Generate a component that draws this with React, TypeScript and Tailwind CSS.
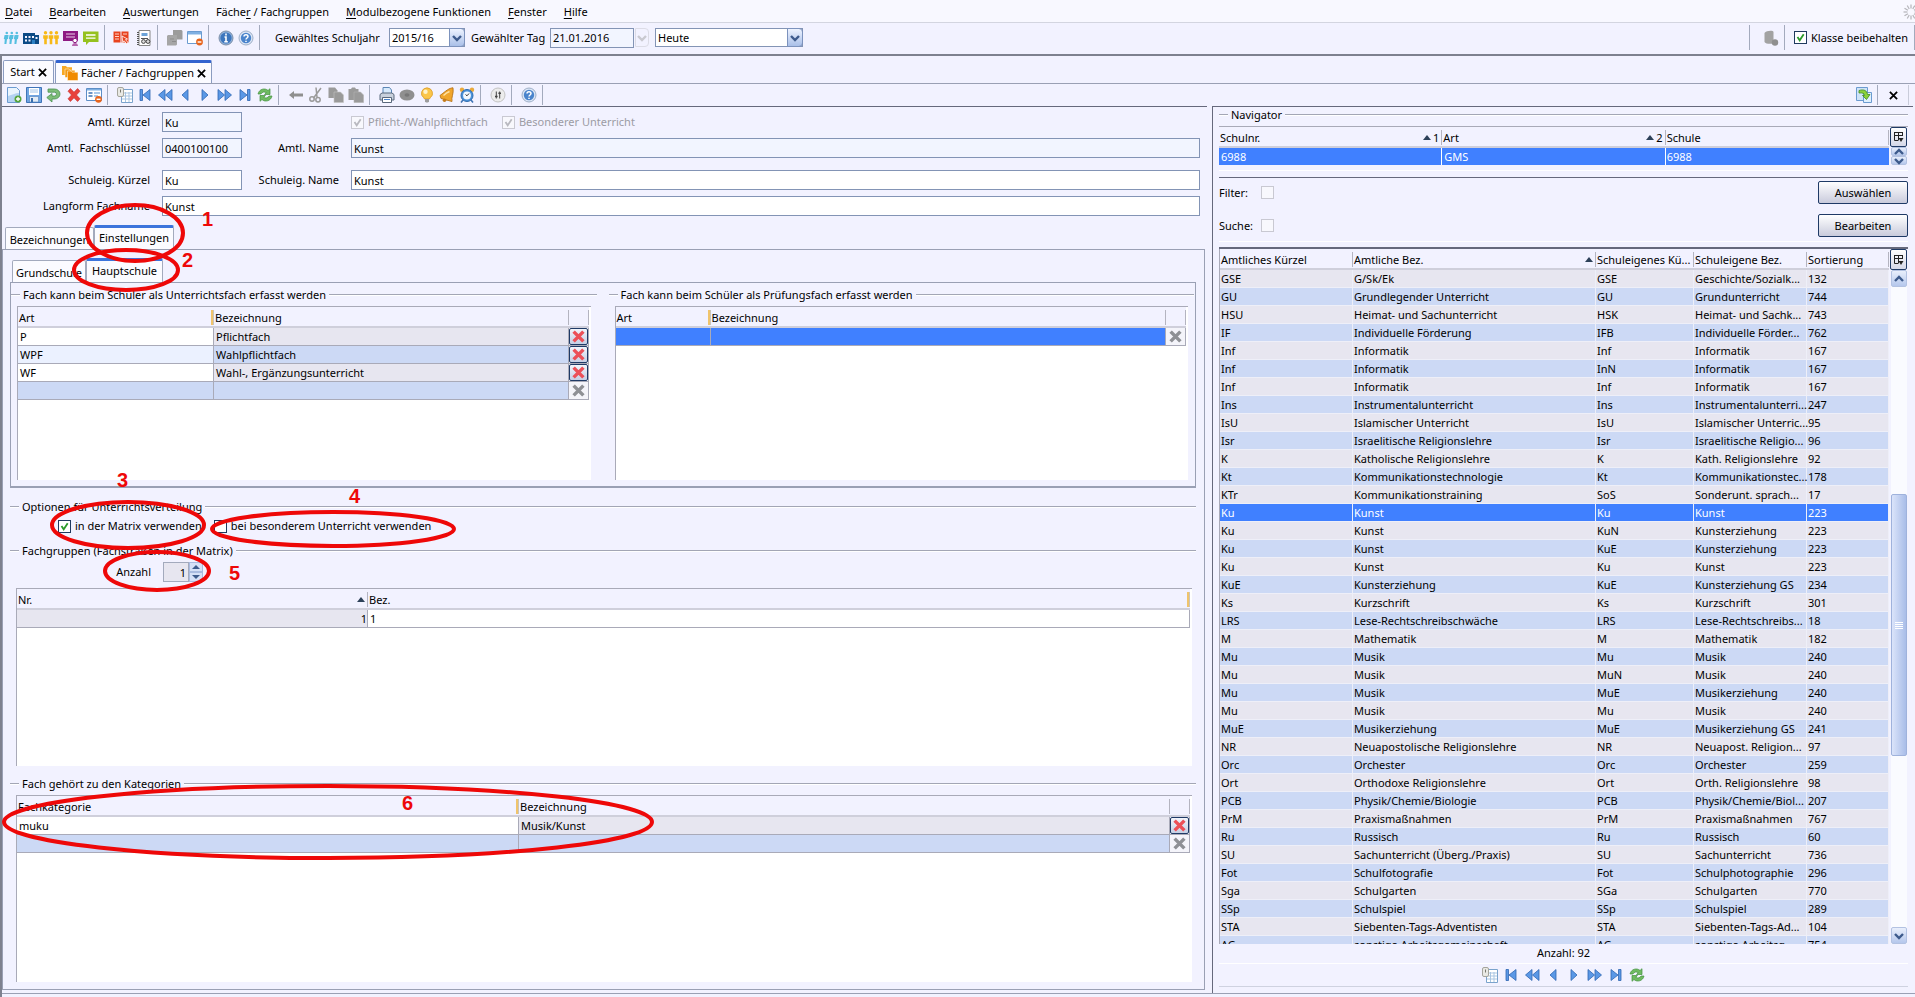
import type { ReactNode } from "react";

type Subject = [string, string, string, string, string];

const MENU: [string, string, string][] = [
  ["", "D", "atei"],
  ["", "B", "earbeiten"],
  ["", "A", "uswertungen"],
  ["Fäche", "r", " / Fachgruppen"],
  ["", "M", "odulbezogene Funktionen"],
  ["", "F", "enster"],
  ["", "H", "ilfe"],
];

const SUBJECTS: Subject[] = [
  ["GSE", "G/Sk/Ek", "GSE", "Geschichte/Sozialk...", "132"],
  ["GU", "Grundlegender Unterricht", "GU", "Grundunterricht", "744"],
  ["HSU", "Heimat- und Sachunterricht", "HSK", "Heimat- und Sachk...", "743"],
  ["IF", "Individuelle Förderung", "IFB", "Individuelle Förder...", "762"],
  ["Inf", "Informatik", "Inf", "Informatik", "167"],
  ["Inf", "Informatik", "InN", "Informatik", "167"],
  ["Inf", "Informatik", "Inf", "Informatik", "167"],
  ["Ins", "Instrumentalunterricht", "Ins", "Instrumentalunterri...", "247"],
  ["IsU", "Islamischer Unterricht", "IsU", "Islamischer Unterric...", "95"],
  ["Isr", "Israelitische Religionslehre", "Isr", "Israelitische Religio...", "96"],
  ["K", "Katholische Religionslehre", "K", "Kath. Religionslehre", "92"],
  ["Kt", "Kommunikationstechnologie", "Kt", "Kommunikationstec...", "178"],
  ["KTr", "Kommunikationstraining", "SoS", "Sonderunt. sprach...", "17"],
  ["Ku", "Kunst", "Ku", "Kunst", "223"],
  ["Ku", "Kunst", "KuN", "Kunsterziehung", "223"],
  ["Ku", "Kunst", "KuE", "Kunsterziehung", "223"],
  ["Ku", "Kunst", "Ku", "Kunst", "223"],
  ["KuE", "Kunsterziehung", "KuE", "Kunsterziehung GS", "234"],
  ["Ks", "Kurzschrift", "Ks", "Kurzschrift", "301"],
  ["LRS", "Lese-Rechtschreibschwäche", "LRS", "Lese-Rechtschreibs...", "18"],
  ["M", "Mathematik", "M", "Mathematik", "182"],
  ["Mu", "Musik", "Mu", "Musik", "240"],
  ["Mu", "Musik", "MuN", "Musik", "240"],
  ["Mu", "Musik", "MuE", "Musikerziehung", "240"],
  ["Mu", "Musik", "Mu", "Musik", "240"],
  ["MuE", "Musikerziehung", "MuE", "Musikerziehung GS", "241"],
  ["NR", "Neuapostolische Religionslehre", "NR", "Neuapost. Religion...", "97"],
  ["Orc", "Orchester", "Orc", "Orchester", "259"],
  ["Ort", "Orthodoxe Religionslehre", "Ort", "Orth. Religionslehre", "98"],
  ["PCB", "Physik/Chemie/Biologie", "PCB", "Physik/Chemie/Biol...", "207"],
  ["PrM", "Praxismaßnahmen", "PrM", "Praxismaßnahmen", "767"],
  ["Ru", "Russisch", "Ru", "Russisch", "60"],
  ["SU", "Sachunterricht (Überg./Praxis)", "SU", "Sachunterricht", "736"],
  ["Fot", "Schulfotografie", "Fot", "Schulphotographie", "296"],
  ["Sga", "Schulgarten", "SGa", "Schulgarten", "770"],
  ["SSp", "Schulspiel", "SSp", "Schulspiel", "289"],
  ["STA", "Siebenten-Tags-Adventisten", "STA", "Siebenten-Tags-Ad...", "104"],
  ["AG", "sonstige Arbeitsgemeinschaft", "AG", "sonstige Arbeitsg...", "754"],
];

const SELECTED_SUBJECT = 13;

const GRAY = "#9a9a9a";

const ICONS: Record<string, ReactNode> = {
  students: (
    <g fill="#55bfe0">
      {[3, 8, 13].map((x) => (
        <g key={x}>
          <circle cx={x + 0.8} cy="3" r="1.3" />
          <path d={`M${x - 1.4} 5h4l-.6 4-1 .2-.6 4.8h-2l.4-4.8-1-.2z`} />
        </g>
      ))}
    </g>
  ),
  teachers: (
    <g fill="#f7b918">
      {[2.5, 8, 13.5].map((x) => (
        <g key={x}>
          <circle cx={x} cy="2.800" r="1.700" />
          <path d={`M${x - 2.3} 5.200h4.600v3.600h-1v5.400h-2.600v-5.400h-1z`} />
        </g>
      ))}
    </g>
  ),
  school: (
    <g>
      <path d="M0 3h12v2h4v9H0z" fill="#0b4a86" />
      <path d="M2 6h2v2H2zM5.500 6h2v2h-2zM9 6h2v2H9zM2 9.500h2v2H2zM5.500 9.500h2v2h-2zM12.500 7h2v2h-2z" fill="#f2f2ff" />
      <path d="M9 10h3v4H9z" fill="#2b7fc4" />
    </g>
  ),
  purple: (
    <g>
      <path d="M0 1h15v10H0z" fill="#8d1a82" />
      <path d="M3 4h9M3 7h9" stroke="#e9cfe8" strokeWidth="1.200" />
      <circle cx="12" cy="10.500" r="2.200" fill="#fff" stroke="#8d1a82" />
      <path d="M9 16c0-4 6-4 6 0z" fill="#b565ad" />
    </g>
  ),
  green: (
    <g>
      <path d="M0 1.500h15.500V12H6l-3 3v-3H0z" fill="#95c11f" />
      <path d="M3 5h9.500M3 8.200h9.500" stroke="#fff" strokeWidth="1.300" />
    </g>
  ),
  redbook: (
    <g>
      <path d="M.5 1.500h7v11h-7zM8.500 1.500h7v11h-7z" fill="#e8431f" />
      <path d="M2 4h4M2 6.500h4M2 9h4M10 4h4" stroke="#ffd3c7" />
      <path d="M9 6l5.500 3-2 .6 2.500 3-1.400 1.200-2.500-3-1.300 1.700z" fill="#e8431f" stroke="#fff" strokeWidth=".8" />
    </g>
  ),
  notebook: (
    <g>
      <path d="M3 .5h11v15H3z" fill="#fff" stroke="#888" />
      <path d="M2 2v13" stroke="#555" strokeWidth="2" strokeDasharray="1 1" />
      <path d="M5.500 3h6v3h-6z" fill="#6ca3d8" />
      <path d="M5 8.500h7" stroke="#555" fill="none" />
      <circle cx="7.500" cy="11.500" r="1.900" fill="#ddd" stroke="#444" />
      <circle cx="12" cy="11.500" r="1.900" fill="#ddd" stroke="#444" />
    </g>
  ),
  grayblocks: (
    <g fill="#9b9b9b">
      <path d="M6 0h8.500l1 1v8.500H6z" />
      <path d="M0 6l1-1h9v9.500l-1 1H0z" fill="#a6a6a6" />
      <path d="M3 9h4M5 11.500h4" stroke="#8d8d8d" />
    </g>
  ),
  windowMinus: (
    <g>
      <path d="M.5 1.500h14v12H.5z" fill="#fff" stroke="#6a9bd0" />
      <path d="M1 2h13v2.500H1z" fill="#7fb0e2" />
      <circle cx="12.500" cy="12" r="3.400" fill="#e8641b" />
      <path d="M10.600 12h3.800" stroke="#fff" strokeWidth="1.400" />
    </g>
  ),
  info: (
    <g>
      <circle cx="8" cy="8" r="7" fill="#8fb2dd" stroke="#7d8fa8" />
      <circle cx="8" cy="8" r="5.600" fill="#3d76bd" />
      <path d="M8 3.600v1.800M6.500 7H8v4.500M6.300 11.700h3.500" stroke="#fff" strokeWidth="1.600" fill="none" />
    </g>
  ),
  help: (
    <g>
      <circle cx="8" cy="8" r="7" fill="#dbe5f5" stroke="#9fb0c8" />
      <circle cx="8" cy="8" r="5.200" fill="#4a84cc" />
      <path d="M6 6.600c0-2.600 4-2.600 4 0 0 1.400-2 1.400-2 3M8 10.700v1.400" stroke="#fff" strokeWidth="1.500" fill="none" />
    </g>
  ),
  newdoc: (
    <g>
      <path d="M1.500.5h9l3 3v12h-12z" fill="#eaf4fd" stroke="#6b9bd0" />
      <path d="M2 9c4-1 7-3 11-3v9H2z" fill="#b5d3f2" />
      <circle cx="12" cy="12" r="3.500" fill="#56a63c" />
      <path d="M12 10v4M10 12h4" stroke="#fff" strokeWidth="1.300" />
    </g>
  ),
  save: (
    <g>
      <path d="M.5.5h15v15H.5z" fill="#6fa5e2" stroke="#3f74b8" />
      <path d="M3 1h10v7H3z" fill="#fff" />
      <path d="M4 3h8M4 5h8" stroke="#9fc2e6" />
      <path d="M3.500 9.500h9V15h-9z" fill="#e2ebf5" stroke="#4f82bd" strokeWidth=".6" />
      <path d="M5 11h2v4H5z" fill="#3a6fae" />
    </g>
  ),
  undo: (
    <path d="M2 2h6.500a5.500 5 0 010 10H6v3L.8 10.500 6 6.500v2.500h2.500a2 1.900 0 000-3.800H2z" fill="#7dbd78" stroke="#4a9150" strokeWidth=".8" />
  ),
  cross: (
    <path d="M2 4.200L4.400 1.500 8 5.200l3.600-3.700L14 4.200 10.500 8l3.500 3.800-2.400 2.700L8 10.800l-3.600 3.700L2 11.800 5.500 8z" fill="#e8413c" stroke="#c22f2c" strokeWidth=".6" />
  ),
  formMinus: (
    <g>
      <path d="M.5 1.500h15v12H.5z" fill="#fff" stroke="#5d8ec6" />
      <path d="M1 2h14v1.500H1z" fill="#7fb0e2" />
      <path d="M2.500 6h4M2.500 9h4" stroke="#3f74b5" strokeWidth="1.400" />
      <path d="M8 5h6v2H8zM8 8h4v2H8z" fill="#a9c9ea" />
      <circle cx="12.500" cy="12.300" r="3.400" fill="#e8641b" />
      <path d="M10.600 12.300h3.800" stroke="#fff" strokeWidth="1.400" />
    </g>
  ),
  list: (
    <g>
      <path d="M4.500 2.500h11v13h-11z" fill="#fff" stroke="#7aa3cc" />
      <path d="M5 6h10M5 9h10M5 12h10M8.500 5v10M12 5v10" stroke="#a9c5e2" />
      <rect x=".5" y=".5" width="6" height="9" rx="1.500" fill="#e9e9e4" stroke="#a5a59c" />
      <path d="M3.500 2.500v3" stroke="#77776e" />
    </g>
  ),
  first: (
    <g fill="#5a98e6" stroke="#2f66b0" strokeWidth=".8">
      <path d="M3 2.500h2.500v11H3z" />
      <path d="M13 2.500v11L6 8z" />
    </g>
  ),
  rewind: (
    <path d="M8 2.500v11L1.500 8zM15 2.500v11L8.500 8z" fill="#5a98e6" stroke="#2f66b0" strokeWidth=".8" />
  ),
  prev: <path d="M11 2.500v11L5 8z" fill="#5a98e6" stroke="#2f66b0" strokeWidth=".8" />,
  next: <path d="M5 2.500v11L11 8z" fill="#5a98e6" stroke="#2f66b0" strokeWidth=".8" />,
  forward: (
    <path d="M1 2.500v11L7.500 8zM8 2.500v11L14.500 8z" fill="#5a98e6" stroke="#2f66b0" strokeWidth=".8" />
  ),
  last: (
    <g fill="#5a98e6" stroke="#2f66b0" strokeWidth=".8">
      <path d="M3 2.500v11L10 8z" />
      <path d="M10.500 2.500H13v11h-2.500z" />
    </g>
  ),
  refresh: (
    <g fill="#6fbb62" stroke="#44903f" strokeWidth=".7">
      <path d="M1 7c1-5 7-6.500 10-3.500l2-1.800V7.500H7.500l1.800-1.800C7.500 4.500 5 5 4 7z" />
      <path d="M15 9c-1 5-7 6.500-10 3.500l-2 1.800V8.500h5.500l-1.800 1.800c1.800 1.200 4.300.7 5.300-1.300z" />
    </g>
  ),
  back: <path d="M1 8l5-4v2.500h9v3H6V12z" fill="#8f8f8f" />,
  cut: (
    <g stroke={GRAY} fill="none" strokeWidth="1.500">
      <path d="M13 1L5.500 11M8 .5l1 9.500" />
      <circle cx="4" cy="12" r="2.200" />
      <circle cx="10" cy="12.800" r="2.200" />
    </g>
  ),
  copy: (
    <g fill={GRAY}>
      <path d="M.5.500h6.500l2.500 3V11h-9z" />
      <path d="M6 5h6.500L15.500 8v7.500H6z" stroke="#c4c4c4" strokeWidth=".6" />
    </g>
  ),
  paste: (
    <g fill={GRAY}>
      <path d="M.5 2H3l1-1.500h3L8 2h2.500v11H.5z" />
      <path d="M6 5h6.500L15.500 8v7.500H6z" stroke="#b4b4b4" strokeWidth=".6" />
    </g>
  ),
  print: (
    <g>
      <path d="M4 .5h6.500l2 2.500v4H4z" fill="#d8eafc" stroke="#5b86b5" />
      <path d="M1 7.500l2-1.500h10l2 1.500V13H1z" fill="#c9d1dc" stroke="#59687c" />
      <path d="M3.500 10.500h9v5h-9z" fill="#fff" stroke="#59687c" />
      <path d="M5 12.500h6" stroke="#4a84cc" />
    </g>
  ),
  disc: (
    <g>
      <ellipse cx="8" cy="8" rx="7.500" ry="5.500" fill="#8f8f8f" />
      <ellipse cx="8" cy="8" rx="2.500" ry="1.800" fill="#777" />
    </g>
  ),
  bulb: (
    <g>
      <path d="M8 .8a6 5.600 0 00-3.200 10L5.500 12h5l.7-1.200A6 5.600 0 008 .8z" fill="#fbc64a" stroke="#d99a25" strokeWidth=".8" />
      <circle cx="6.500" cy="4.800" r="2.200" fill="#fff3cb" />
      <path d="M6 12h4v2.500l-1 1H7l-1-1z" fill="#9d9d9d" />
    </g>
  ),
  horn: (
    <g>
      <path d="M14 .8C10 1 7 4 1 8.500l1 3 11 3c-1-4 2-8 1-13.700z" fill="#f0a52a" stroke="#b8741a" strokeWidth=".9" />
      <path d="M10.500 4.500C8 5.500 6 7 4.500 8.500" stroke="#ffe1a0" strokeWidth="1.400" fill="none" />
      <circle cx="5.500" cy="13.200" r="1.800" fill="#c47c1c" />
    </g>
  ),
  clock: (
    <g>
      <circle cx="3" cy="2.800" r="2.200" fill="#e9a93b" />
      <circle cx="13" cy="2.800" r="2.200" fill="#e9a93b" />
      <path d="M4 13l-2 2.500M12 13l2 2.500" stroke="#3f74b5" strokeWidth="1.600" />
      <circle cx="8" cy="8.500" r="6" fill="#4b93da" stroke="#2f6cae" />
      <circle cx="8" cy="8.500" r="3.900" fill="#f3f9ff" />
      <path d="M8 8.800l2-2.300M8 8.800L6.500 7.500" stroke="#333" />
    </g>
  ),
  sliders: (
    <g>
      <circle cx="8" cy="8" r="7" fill="#ececec" stroke="#c3c3c3" />
      <path d="M6.300 4.500v7M9.700 4.500v7" stroke="#444" />
      <path d="M5 9.500h2.600M8.400 6.300H11" stroke="#444" strokeWidth="1.600" />
    </g>
  ),
  folders: (
    <g>
      <path d="M0 1h4l1 1.200h5V10H0z" fill="#f7a823" />
      <path d="M3 4h4l1 1.200h5V12.500H3z" fill="#f39a10" stroke="#fff" strokeWidth=".5" />
      <path d="M5.500 6h3.500l1 1.200h6V15.500H5.500z" fill="#f08a00" stroke="#fff" strokeWidth=".5" />
    </g>
  ),
  export: (
    <g>
      <path d="M.5.500h11v13H.5z" fill="#cfe3f8" stroke="#6b9bd0" />
      <path d="M7.500 5.500h8v10h-8z" fill="#dff0fd" stroke="#6b9bd0" />
      <path d="M3 3.500c5-1.500 8 0 8.500 4H14l-3.500 5L6.500 8.500h2c0-2-2-3-5.500-2.500z" fill="#8bd23a" stroke="#3f8a1e" strokeWidth=".8" />
    </g>
  ),
  db: (
    <g fill="#a2a2a2">
      <path d="M1.500 3C3 .5 10.500 0 10.500 2v11c-2 1.500-8 1-9-1z" />
      <circle cx="12" cy="12.500" r="3.200" fill="#8f8f8f" />
    </g>
  ),
};

function Icon({ name }: { name: string }) {
  return (
    <svg viewBox="0 0 16 16" className="size-4 shrink-0" aria-hidden="true">
      {ICONS[name]}
    </svg>
  );
}

function CloseGlyph() {
  return (
    <svg viewBox="0 0 8 8" className="size-[9px]" aria-hidden="true">
      <path d="M.8.8l6.400 6.400M7.200.8L.8 7.200" stroke="#000" strokeWidth="1.600" />
    </svg>
  );
}

function ToolGroup({ icons, className = "pl-[9px] gap-1" }: { icons: string[]; className?: string }) {
  return (
    <div className={`flex items-center self-stretch border-r border-[#a3aabd] pr-[5px] ${className}`}>
      {icons.map((name) => (
        <button key={name} type="button" aria-label={name}>
          <Icon name={name} />
        </button>
      ))}
    </div>
  );
}

function Chevron({ up, color = "#3d5a8c" }: { up?: boolean; color?: string }) {
  return (
    <svg viewBox="0 0 10 8" className="h-2 w-2.5" aria-hidden="true">
      <path d={up ? "M1 6l4-4 4 4" : "M1 2l4 4 4-4"} fill="none" stroke={color} strokeWidth="2.400" />
    </svg>
  );
}

function Combo({ label, value, width }: { label: string; value: string; width: string }) {
  return (
    <div className={`relative h-[19px] ${width}`}>
      <select
        aria-label={label}
        defaultValue={value}
        className="h-full w-full appearance-none border border-[#8394b5] bg-white pl-0.5 pr-4 leading-4"
      >
        <option>{value}</option>
      </select>
      <span className="pointer-events-none absolute right-0 top-0 flex h-full w-4 items-center justify-center rounded-r-sm border border-[#7c92bd] bg-linear-to-b from-[#eef3ff] to-[#a9bfe8]">
        <Chevron />
      </span>
    </div>
  );
}

function Box({ id, checked, disabled }: { id: string; checked?: boolean; disabled?: boolean }) {
  return (
    <span className="relative flex size-[13px] shrink-0">
      <input
        id={id}
        type="checkbox"
        defaultChecked={checked}
        disabled={disabled}
        className={`size-[13px] appearance-none border ${
          disabled ? "border-[#c9c9d2] bg-[#f8f8fd]" : "border-[#1f3a5f] bg-white"
        }`}
      />
      {checked && (
        <svg viewBox="0 0 13 13" className="pointer-events-none absolute inset-0">
          <path d="M3.500 6l2.200 3.300 4-6" fill="none" stroke={disabled ? "#b9b9c0" : "#2b9a2b"} strokeWidth="1.800" />
        </svg>
      )}
    </span>
  );
}

function Check({ id, label, checked, disabled }: { id: string; label: string; checked?: boolean; disabled?: boolean }) {
  return (
    <div className={`flex items-center gap-1 whitespace-nowrap ${disabled ? "text-[#9c9ca4]" : ""}`}>
      <Box id={id} checked={checked} disabled={disabled} />
      <label htmlFor={id}>{label}</label>
    </div>
  );
}

function Field({
  id,
  label,
  value,
  labelWidth,
  width,
  readOnly,
}: {
  id: string;
  label: string;
  value: string;
  labelWidth: string;
  width: string;
  readOnly?: boolean;
}) {
  return (
    <>
      <label htmlFor={id} className={`whitespace-pre text-right ${labelWidth}`}>
        {label}
      </label>
      <input
        id={id}
        defaultValue={value}
        readOnly={readOnly}
        className={`ml-3 h-5 border border-[#8394b5] px-0.5 ${width} ${readOnly ? "bg-[#f2f5ff]" : "bg-white"}`}
      />
    </>
  );
}

function Title({ children }: { children: ReactNode }) {
  return (
    <div className="flex h-4 items-center gap-[3px]">
      <span className="h-0.5 w-[9px] border-b border-t border-b-white border-t-[#a3a6b5]" />
      <h2 className="whitespace-nowrap">{children}</h2>
      <span className="h-0.5 flex-1 border-b border-t border-b-white border-t-[#a3a6b5]" />
    </div>
  );
}

type Mark = "orange" | "gray" | "none";

function Th({ children, mark = "gray", sort }: { children?: ReactNode; mark?: Mark; sort?: string }) {
  return (
    <th className="border-b-2 border-[#cfcfdb] bg-[#f2f2ff] p-0 text-left font-normal">
      <div className="flex h-[19px] items-center pl-px pt-0.5">
        <span className="min-w-0 flex-1 whitespace-nowrap">{children}</span>
        {sort !== undefined && (
          <span className="flex items-center gap-0.5 pr-0.5">
            <svg viewBox="0 0 8 5" className="h-[5px] w-2" aria-hidden="true">
              <path d="M4 0l4 5H0z" fill="#2d4159" />
            </svg>
            {sort}
          </span>
        )}
        {mark === "orange" && <span className="h-[15px] w-[3px] border-r border-[#c9c4bb] bg-[#f0c46c]" />}
        {mark === "gray" && <span className="h-[15px] w-px bg-[#b4b4c0]" />}
      </div>
    </th>
  );
}

// last cell of an editable row, holds the delete button
function DeleteCell({ active }: { active?: boolean }) {
  return (
    <td className="border-b border-r border-[#a9aab8] bg-[#f4f4fa] p-0">
      <button
        type="button"
        aria-label="Zeile löschen"
        disabled={!active}
        className={`flex h-[17px] w-full items-center justify-center ${
          active ? "rounded-xs border border-[#1f3a66] bg-linear-to-b from-[#f2f5fc] to-[#c5cfe4]" : ""
        }`}
      >
        <svg viewBox="0 0 12 12" className="size-[13px]">
          <path d="M1.500 1.500l9 9M10.500 1.500l-9 9" stroke={active ? "#ec5058" : "#8e9095"} strokeWidth="3.200" />
        </svg>
      </button>
    </td>
  );
}

const CELL = "h-[18px] whitespace-nowrap border-b border-r border-[#a9aab8] py-0 pl-0.5 pr-0";

function TablePane({ className, children }: { className: string; children: ReactNode }) {
  return (
    <div className={`overflow-hidden border-l border-t border-[#a9aab8] bg-white ${className}`}>
      {children}
    </div>
  );
}

function UnterrichtsfachTable() {
  const rows = [
    ["P", "Pflichtfach", "bg-white", "bg-[#e7e6f0]"],
    ["WPF", "Wahlpflichtfach", "bg-[#ebf1ff]", "bg-[#ccd9f5]"],
    ["WF", "Wahl-, Ergänzungsunterricht", "bg-white", "bg-[#e7e6f0]"],
    ["", "", "bg-[#ccd9f5]", "bg-[#ccd9f5]"],
  ];
  return (
    <table className="w-full table-fixed border-separate border-spacing-0">
      <colgroup>
        <col className="w-[196px]" />
        <col />
        <col className="w-5" />
      </colgroup>
      <thead>
        <tr>
          <Th mark="orange">Art</Th>
          <Th>Bezeichnung</Th>
          <Th />
        </tr>
      </thead>
      <tbody>
        {rows.map(([art, bez, left, right]) => (
          <tr key={art}>
            <td className={`${CELL} ${left}`}>{art}</td>
            <td className={`${CELL} ${right}`}>{bez}</td>
            <DeleteCell active={art !== ""} />
          </tr>
        ))}
      </tbody>
    </table>
  );
}

function PruefungsfachTable() {
  return (
    <table className="w-full table-fixed border-separate border-spacing-0">
      <colgroup>
        <col className="w-[95px]" />
        <col />
        <col className="w-5" />
      </colgroup>
      <thead>
        <tr>
          <Th mark="orange">Art</Th>
          <Th>Bezeichnung</Th>
          <Th />
        </tr>
      </thead>
      <tbody>
        <tr>
          <td className={`${CELL} bg-[#4080ff]`} />
          <td className={`${CELL} bg-[#4080ff]`} />
          <DeleteCell />
        </tr>
      </tbody>
    </table>
  );
}

function FachgruppenTable() {
  return (
    <table className="w-full table-fixed border-separate border-spacing-0">
      <colgroup>
        <col className="w-[351px]" />
        <col />
      </colgroup>
      <thead>
        <tr>
          <Th sort="">Nr.</Th>
          <Th mark="orange">Bez.</Th>
        </tr>
      </thead>
      <tbody>
        <tr>
          <td className={`${CELL} bg-[#e7e6f0] text-right`}>1</td>
          <td className={`${CELL} bg-white`}>1</td>
        </tr>
      </tbody>
    </table>
  );
}

function KategorienTable() {
  return (
    <table className="w-full table-fixed border-separate border-spacing-0">
      <colgroup>
        <col className="w-[502px]" />
        <col />
        <col className="w-5" />
      </colgroup>
      <thead>
        <tr>
          <Th mark="orange">Fachkategorie</Th>
          <Th>Bezeichnung</Th>
          <Th />
        </tr>
      </thead>
      <tbody>
        <tr>
          <td className={`${CELL} bg-white`}>muku</td>
          <td className={`${CELL} bg-[#e7e6f0]`}>Musik/Kunst</td>
          <DeleteCell active />
        </tr>
        <tr>
          <td className={`${CELL} bg-[#ccd9f5]`} />
          <td className={`${CELL} bg-[#ccd9f5]`} />
          <DeleteCell />
        </tr>
      </tbody>
    </table>
  );
}

function ColumnButton() {
  return (
    <button
      type="button"
      aria-label="Spalten"
      className="flex h-[21px] w-[17px] items-center justify-center rounded-xs border border-[#1f3a66] bg-linear-to-b from-white to-[#d5d8e8]"
    >
      <svg viewBox="0 0 11 12" className="h-3 w-[11px]">
        <path d="M1 1.500h9M1 4.500h9M1.500 1v8.500h4M5.500 1v8M9.500 1v4" fill="none" stroke="#222" />
        <path d="M5.500 7h5L8 11z" fill="#222" />
      </svg>
    </button>
  );
}

function ScrollButton({ up, small }: { up?: boolean; small?: boolean }) {
  return (
    <button
      type="button"
      aria-label={up ? "Nach oben" : "Nach unten"}
      className={`flex w-4 items-center justify-center rounded-xs border border-[#b3c2e2] bg-linear-to-b from-[#e9effc] to-[#b5c7ec] ${
        small ? "h-[9px]" : "h-[17px]"
      }`}
    >
      <Chevron up={up} />
    </button>
  );
}

function MainToolbar() {
  return (
    <div className="flex h-[33px] items-center border-b-2 border-[#7e818f] bg-[#f2f2ff] pb-1 pt-0.5">
      <ToolGroup icons={["students", "school", "teachers", "purple", "green"]} className="gap-1 pl-[3px]" />
      <ToolGroup icons={["redbook", "notebook"]} className="gap-[7px] pl-2" />
      <ToolGroup icons={["grayblocks", "windowMinus"]} />
      <ToolGroup icons={["info", "help"]} />
      <span className="ml-[15px] w-[104px] whitespace-nowrap">Gewähltes Schuljahr</span>
      <div className="ml-2.5">
        <Combo label="Gewähltes Schuljahr" value="2015/16" width="w-[76px]" />
      </div>
      <label htmlFor="tag" className="ml-1.5 w-[73px] whitespace-nowrap">
        Gewählter Tag
      </label>
      <input
        id="tag"
        defaultValue="21.01.2016"
        readOnly
        className="ml-1.5 h-5 w-[84px] border border-[#8394b5] bg-[#f2f5ff] px-0.5"
      />
      <button
        type="button"
        disabled
        aria-label="Kalender"
        className="ml-px flex h-[19px] w-3.5 items-center justify-center rounded-r-sm border border-[#dcdce6]"
      >
        <Chevron color="#c9c9d0" />
      </button>
      <div className="ml-1.5">
        <Combo label="Zeitpunkt" value="Heute" width="w-[148px]" />
      </div>
      <div className="ml-auto flex items-center self-stretch border-l border-[#a3aabd]">
        <ToolGroup icons={["db"]} className="pl-[13px]" />
      </div>
      <div className="flex items-center self-stretch border-r border-[#a3aabd] pl-[9px] pr-1.5">
        <Check id="klasse" label="Klasse beibehalten" checked />
      </div>
    </div>
  );
}

function SubjectForm() {
  return (
    <div className="pr-[7px] pt-[5px]">
      <div className="flex items-center">
        <Field id="ak" label="Amtl. Kürzel" value="Ku" labelWidth="w-[148px]" width="w-20" readOnly />
        <div className="ml-[109px] flex gap-3.5">
          <Check id="pflicht" label="Pflicht-/Wahlpflichtfach" checked disabled />
          <Check id="besonderer" label="Besonderer Unterricht" checked disabled />
        </div>
      </div>
      <div className="mt-1.5 flex items-center">
        <Field id="af" label="Amtl.  Fachschlüssel" value="0400100100" labelWidth="w-[148px]" width="w-20" readOnly />
        <Field id="an" label="Amtl. Name" value="Kunst" labelWidth="w-[97px]" width="flex-1" readOnly />
      </div>
      <div className="mt-3 flex items-center">
        <Field id="sk" label="Schuleig. Kürzel" value="Ku" labelWidth="w-[148px]" width="w-20" />
        <Field id="sn" label="Schuleig. Name" value="Kunst" labelWidth="w-[97px]" width="flex-1" />
      </div>
      <div className="mt-1.5 flex items-center">
        <Field id="lf" label="Langform Fachname" value="Kunst" labelWidth="w-[148px]" width="flex-1" />
      </div>
    </div>
  );
}

function InnerTab({ label, active, width }: { label: string; active?: boolean; width: string }) {
  return (
    <button
      type="button"
      className={`flex justify-center rounded-t-xs border-x border-[#a3aabd] bg-[#fbfbff] ${width} ${
        active ? "h-6 border-t-3 border-t-[#3c74dc] pt-0.5" : "h-[22px] border-t pt-1"
      }`}
    >
      {label}
    </button>
  );
}

function SpinButton({ label, d }: { label: string; d: string }) {
  return (
    <button
      type="button"
      aria-label={label}
      className="flex h-2.5 w-3.5 items-center justify-center border border-[#a9bbe0] bg-[#d5e0f7]"
    >
      <svg viewBox="0 0 8 4" className="h-1 w-2">
        <path d={d} fill="#3d5a8c" />
      </svg>
    </button>
  );
}

function SubjectTabs() {
  return (
    <div className="mr-0.5 mt-[9px] flex min-h-0 flex-1 flex-col">
      <div className="flex h-6 items-end pl-[3px]">
        <InnerTab label="Bezeichnungen" width="w-[89px]" />
        <InnerTab label="Einstellungen" active width="w-20" />
      </div>
      <div className="flex min-h-0 flex-1 flex-col border border-[#9aa0b4] pb-[7px] pl-[7px] pr-2 pt-2">
        <div className="flex h-6 items-end pl-0.5">
          <InnerTab label="Grundschule" width="w-[74px]" />
          <InnerTab label="Hauptschule" active width="w-[77px]" />
        </div>
        <div className="flex gap-3 border border-b-2 border-[#9aa0b4] pb-1.5 pr-px pt-1">
          <div className="min-w-0 flex-1">
            <Title>Fach kann beim Schüler als Unterrichtsfach erfasst werden</Title>
            <TablePane className="ml-1.5 mr-1.5 mt-[3px] h-[174px] pr-0.5">
              <UnterrichtsfachTable />
            </TablePane>
          </div>
          <div className="min-w-0 flex-1">
            <Title>Fach kann beim Schüler als Prüfungsfach erfasst werden</Title>
            <TablePane className="ml-1.5 mr-1.5 mt-[3px] h-[174px] pr-0.5">
              <PruefungsfachTable />
            </TablePane>
          </div>
        </div>
        <div className="mt-[11px]">
          <Title>Optionen für Unterrichtsverteilung</Title>
        </div>
        <div className="ml-12 mt-1 flex h-3.5 items-center gap-3">
          <Check id="matrix" label="in der Matrix verwenden" checked />
          <Check id="unterricht" label="bei besonderem Unterricht verwenden" />
        </div>
        <div className="mt-2.5">
          <Title>Fachgruppen (Fachstraßen in der Matrix)</Title>
        </div>
        <div className="mt-[3px] flex h-5 items-center">
          <label htmlFor="anzahl" className="w-[141px] text-right">
            Anzahl
          </label>
          <input
            id="anzahl"
            defaultValue="1"
            className="ml-3 h-5 w-[26px] border border-[#a3aabd] bg-[#e7e6f0] pr-0.5 text-right"
          />
          <div className="flex flex-col">
            <SpinButton label="Mehr" d="M4 0l4 4H0z" />
            <SpinButton label="Weniger" d="M4 4l4-4H0z" />
          </div>
        </div>
        <TablePane className="ml-1.5 mr-1 mt-1.5 h-[178px] shrink-0 pr-0.5">
          <FachgruppenTable />
        </TablePane>
        <div className="mt-2.5">
          <Title>Fach gehört zu den Kategorien</Title>
        </div>
        <TablePane className="ml-1.5 mr-1 mt-[3px] min-h-0 flex-1 pr-0.5">
          <KategorienTable />
        </TablePane>
      </div>
    </div>
  );
}

function FilterRow({ id, label, action }: { id: string; label: string; action: string }) {
  return (
    <div className="flex items-center justify-between">
      <div className="flex items-center">
        <label htmlFor={id} className="w-[42px]">
          {label}
        </label>
        <Box id={id} disabled />
      </div>
      <button
        type="button"
        className="h-[23px] w-[90px] rounded-xs border border-[#1f3a66] bg-linear-to-b from-white to-[#c9cbdc]"
      >
        {action}
      </button>
    </div>
  );
}

function Navigator() {
  return (
    <div className="flex min-h-0 flex-1 flex-col border-l border-t border-[#66697c] pl-1.5 pr-[5px]">
      <Title>Navigator</Title>
      <div className="mt-[3px] flex h-[39px] border-t border-[#a9aab8]">
        <div className="min-w-0 flex-1">
          <table className="w-full table-fixed border-separate border-spacing-0">
            <thead>
              <tr>
                <Th sort="1">Schulnr.</Th>
                <Th sort="2">Art</Th>
                <Th>Schule</Th>
              </tr>
            </thead>
            <tbody>
              <tr className="bg-[#4080ff] text-white">
                <td className="h-[17px] border-r border-white p-0 pl-0.5">6988</td>
                <td className="h-[17px] border-r border-white p-0 pl-0.5">GMS</td>
                <td className="h-[17px] p-0 pl-px">6988</td>
              </tr>
            </tbody>
          </table>
        </div>
        <div className="flex w-[19px] flex-col items-center">
          <ColumnButton />
          <ScrollButton up small />
          <ScrollButton small />
        </div>
      </div>
      <div className="mt-[5px] border-t border-white" />
      <div className="mt-1.5 border-t border-[#66697c]" />
      <div className="mt-[3px] flex flex-col gap-2.5">
        <FilterRow id="filter" label="Filter:" action="Auswählen" />
        <FilterRow id="suche" label="Suche:" action="Bearbeiten" />
      </div>
      <div className="mt-1 border-t border-white" />
      <div className="mt-[5px] flex min-h-0 flex-1 border-t-2 border-[#66697c]">
        <div className="min-w-0 flex-1 overflow-hidden border-l border-[#a9aab8]">
          <table className="w-full table-fixed border-separate border-spacing-0">
            <colgroup>
              <col className="w-[133px]" />
              <col />
              <col className="w-[98px]" />
              <col className="w-[113px]" />
              <col className="w-[82px]" />
            </colgroup>
            <thead>
              <tr>
                <Th>Amtliches Kürzel</Th>
                <Th sort="">Amtliche Bez.</Th>
                <Th>Schuleigenes Kü...</Th>
                <Th>Schuleigene Bez.</Th>
                <Th>Sortierung</Th>
              </tr>
            </thead>
            <tbody>
              {SUBJECTS.map((s, i) => (
                <tr
                  key={i}
                  className={
                    i === SELECTED_SUBJECT
                      ? "bg-[#4080ff] text-white"
                      : i % 2
                        ? "bg-[#ccd9f5]"
                        : "bg-[#e7e6f0]"
                  }
                >
                  {s.map((text, c) => (
                    <td
                      key={c}
                      className="h-[18px] whitespace-nowrap border-b border-r border-[#eeeff8] py-0 pl-px pr-0"
                    >
                      {text}
                    </td>
                  ))}
                </tr>
              ))}
            </tbody>
          </table>
        </div>
        <div className="flex w-[19px] flex-col items-center">
          <ColumnButton />
          <div className="flex w-4 flex-1 flex-col bg-[#fafbff]">
            <ScrollButton up />
            <div className="flex-[207]" />
            <div className="flex flex-[259] flex-col items-center justify-center gap-px rounded-xs border border-[#9fb2dc] bg-linear-to-r from-[#dbe4fa] to-[#a9bde8]">
              <span className="h-px w-2 bg-white" />
              <span className="h-px w-2 bg-white" />
              <span className="h-px w-2 bg-white" />
              <span className="h-px w-2 bg-white" />
            </div>
            <div className="flex-[171]" />
            <ScrollButton />
          </div>
        </div>
      </div>
      <p className="mt-px text-center">Anzahl: 92</p>
      <div className="mt-0.5 flex h-6 items-center justify-center gap-[5px] border-b border-t border-b-[#cfd2e0] border-t-white">
        {["list", "first", "rewind", "prev", "next", "forward", "last", "refresh"].map((name) => (
          <button key={name} type="button" aria-label={name}>
            <Icon name={name} />
          </button>
        ))}
      </div>
      <div className="h-1.5" />
    </div>
  );
}

const MARKS = [
  { n: 1, cx: 135, cy: 233, rx: 48, ry: 28, x: 202, y: 226 },
  { n: 2, cx: 126, cy: 270, rx: 52, ry: 20, x: 182, y: 267 },
  { n: 3, cx: 128, cy: 525, rx: 76, ry: 23, x: 117, y: 487 },
  { n: 4, cx: 333, cy: 529, rx: 121, ry: 17, x: 349, y: 503 },
  { n: 5, cx: 157, cy: 571, rx: 52, ry: 19, x: 229, y: 580 },
  { n: 6, cx: 328, cy: 822, rx: 324, ry: 36, x: 402, y: 810 },
];

function Annotations() {
  return (
    <svg className="pointer-events-none absolute left-0 top-0 h-full w-[700px]">
      {MARKS.map((m) => (
        <g key={m.n}>
          <ellipse cx={m.cx} cy={m.cy} rx={m.rx} ry={m.ry} fill="none" stroke="#ee0808" strokeWidth="4" />
          <text x={m.x} y={m.y} fill="#ee0808" className="font-['Liberation_Sans',sans-serif] text-[20px] font-bold">
            {m.n}
          </text>
        </g>
      ))}
    </svg>
  );
}

export default function App() {
  return (
    <div className="relative flex h-screen flex-col overflow-hidden bg-[#f2f2ff] font-['Noto_Sans',sans-serif] text-[11px] leading-4 text-black">
      <nav className="flex h-[23px] items-center gap-[17px] border-b border-[#d3d5e0] bg-[#f8f8ff] pl-[5px] pt-px">
        {MENU.map(([before, key, after]) => (
          <button key={before + key + after} type="button" className="whitespace-pre">
            {before}
            <span className="underline underline-offset-2">{key}</span>
            {after}
          </button>
        ))}
        <svg viewBox="0 0 16 16" className="-mr-1 ml-auto size-4" aria-hidden="true">
          {[0, 30, 60, 90, 120, 150, 180, 210, 240, 270, 300, 330].map((a) => (
            <path key={a} d="M8 .5v4" stroke="#b5b5ba" strokeWidth="1.200" transform={`rotate(${a} 8 8)`} />
          ))}
        </svg>
      </nav>
      <MainToolbar />
      <div className="flex min-h-0 flex-1 flex-col border-l-2 border-[#7e818f]">
        <div className="flex h-7 items-end border-b border-[#9aa0b4] pl-px">
          <div className="flex h-[23px] w-[51px] items-center justify-center gap-[3px] rounded-t-xs border-x border-t border-[#8b9cc0] bg-[#fbfbff]">
            Start
            <button type="button" aria-label="Start schließen">
              <CloseGlyph />
            </button>
          </div>
          <div className="ml-px flex h-[23px] w-[157px] items-center gap-[3px] rounded-t-xs border-x border-t-3 border-[#8b9cc0] border-t-[#3263cf] bg-[#fbfbff] pl-1.5">
            <Icon name="folders" />
            <span className="w-[113px] whitespace-nowrap">Fächer / Fachgruppen</span>
            <button type="button" aria-label="Fächer schließen">
              <CloseGlyph />
            </button>
          </div>
        </div>
        <main className="flex min-h-0 flex-1 gap-[5px] border-b border-[#9aa0b4] pr-0.5">
          <section className="flex min-w-0 flex-1 flex-col">
            <div className="flex h-[22px] items-center py-px">
              <ToolGroup icons={["newdoc", "save", "undo", "cross", "formMinus"]} className="gap-1 pl-1" />
              <ToolGroup icons={["list", "first", "rewind", "prev", "next", "forward", "last", "refresh"]} />
              <ToolGroup icons={["back", "cut", "copy", "paste"]} />
              <ToolGroup icons={["print", "disc", "bulb", "horn", "clock"]} />
              <ToolGroup icons={["sliders"]} />
              <ToolGroup icons={["help"]} />
            </div>
            <div className="flex min-h-0 flex-1 flex-col border-t border-[#66697c] pb-[3px]">
              <SubjectForm />
              <SubjectTabs />
            </div>
          </section>
          <aside className="flex w-[701px] flex-col">
            <div className="flex h-[22px] items-center justify-end py-px pr-1">
              <ToolGroup icons={["export"]} className="" />
              <button
                type="button"
                aria-label="Schließen"
                className="flex w-[31px] items-center justify-center self-stretch border-r border-[#c9ccda]"
              >
                <CloseGlyph />
              </button>
            </div>
            <Navigator />
          </aside>
        </main>
        <div className="h-[3px]" />
      </div>
      <Annotations />
    </div>
  );
}
